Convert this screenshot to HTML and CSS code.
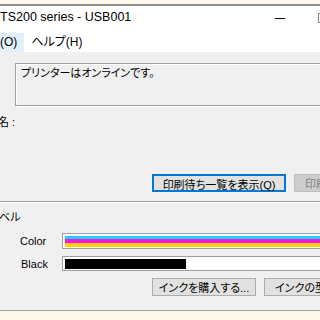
FILE: index.html
```html
<!DOCTYPE html>
<html lang="ja">
<head>
    <meta charset="UTF-8">
    <title>TS200 series - USB001</title>
    <link rel="stylesheet" href="styles.css">
</head>
<body>
    <div class="desk top"></div>
    <div class="window">
        <div class="titlebar">
            <span class="title">TS200 series - USB001</span>
            <div class="controls">
                <span class="min"></span>
                <span class="max"></span>
            </div>
        </div>
        <div class="menubar">
            <span class="menu active">(O)</span>
            <span class="menu">ヘルプ(H)</span>
        </div>
        <div class="client">
            <div class="status">プリンターはオンラインです。</div>
            <div class="label name">名 :</div>
            <div class="label colon">：</div>
            <div class="btnrow queue">
                <button class="btn default">印刷待ち一覧を表示(Q)</button>
                <button class="btn" disabled>印刷設定(S)...</button>
            </div>
            <div class="sep"></div>
            <div class="label level">ベル</div>
            <div class="inkrow color">
                <span class="inklabel">Color</span>
                <div class="gauge">
                    <div class="stripe cyan"></div>
                    <div class="stripe magenta"></div>
                    <div class="stripe yellow"></div>
                </div>
            </div>
            <div class="inkrow black">
                <span class="inklabel">Black</span>
                <div class="gauge">
                    <div class="fill" style="width: 121px"></div>
                </div>
            </div>
            <div class="btnrow ink">
                <button class="btn buy">インクを購入する...</button>
                <button class="btn">インクの型番(M)...</button>
            </div>
        </div>
        <div class="desk bottom"></div>
    </div>
</body>
</html>
```

FILE: styles.css
```css
body {
    margin: 0;
    width: 320px;
    height: 320px;
    overflow: hidden;
    background: #fdf8ec;
    font-family: "Liberation Sans", "Noto Sans CJK JP", sans-serif;
    font-feature-settings: "palt";
}
.desk {
    background: #fdf8ec;
}
.desk.top {
    height: 4px;
    border-bottom: 2px solid #8e8e8e;
}
.window {
    width: 320px;
    overflow: hidden;
}
.titlebar {
    height: 22px;
    background: #fff;
    display: flex;
    align-items: center;
    font-size: 12.5px;
    color: #000;
}
.title {
    flex: 1;
    white-space: nowrap;
}
.controls {
    display: flex;
    flex-shrink: 0;
    align-items: center;
    gap: 33px;
    margin-right: -8px;
}
.min {
    flex-shrink: 0;
    width: 10px;
    height: 1px;
    background: #000;
    margin-top: 3px;
}
.max {
    flex-shrink: 0;
    width: 8px;
    height: 8px;
    border: 1px solid #8a8a8a;
    margin-top: 2px;
}
.menubar {
    height: 24px;
    background: #fff;
    display: flex;
    align-items: flex-end;
    font-size: 12px;
}
.menu {
    height: 19px;
    line-height: 19px;
    padding: 0 7px;
}
.menu.active {
    background: #e3f0fb;
    padding: 0 7px 0 0;
}
.client {
    background: #f0f0f0;
    height: 258px;
    border-bottom: 1px solid #9e9e9e;
    font-size: 11px;
    color: #000;
    display: flex;
    flex-direction: column;
    width: 420px;
}
.status {
    margin: 11px 0 0 15px;
    border: 1px solid #a0a0a0;
    box-shadow: inset 1px 1px #fff, 1px 1px #fff;
    padding: 3px 5px;
    line-height: 13px;
    box-sizing: border-box;
    height: 43px;
}
.label {
    height: 13px;
    line-height: 13px;
}
.label.name {
    margin-top: 10px;
    margin-left: -2px;
}
.label.colon {
    margin-top: 27px;
    margin-left: -9px;
}
.btnrow {
    display: flex;
    gap: 8px;
    padding-left: 152px;
}
.btnrow.queue {
    margin-top: 5px;
}
.btn {
    height: 18px;
    padding: 0 10px;
    font: inherit;
    font-feature-settings: "palt";
    background: #e1e1e1;
    border: 1px solid #adadad;
    color: #000;
    white-space: nowrap;
}
.btn.default {
    border: 2px solid #0078d7;
    width: 134px;
    padding: 0;
}
.btn:disabled {
    background: #cccccc;
    border-color: #bfbfbf;
    color: #838383;
}
.sep {
    margin-top: 9px;
    height: 1px;
    background: #a0a0a0;
    border-bottom: 1px solid #fff;
}
.label.level {
    margin-top: 8px;
    margin-left: -1px;
}
.inkrow {
    display: flex;
    align-items: center;
}
.inkrow.color {
    margin-top: 9px;
}
.inkrow.black {
    margin-top: 7px;
}
.inklabel {
    width: 42px;
    padding-left: 20px;
}
.inkrow.black .inklabel {
    padding-left: 21px;
    width: 41px;
}
.gauge {
    flex: 1;
    background: #fff;
    border: 1px solid #a0a0a0;
    padding: 2px 2px 1px;
}
.stripe {
    height: 4px;
}
.stripe.cyan {
    height: 3px;
    background: #1ed2f4;
}
.stripe.magenta {
    background: #f914e4;
}
.stripe.yellow {
    background: #fcd400;
}
.fill {
    height: 10px;
    background: #000;
}
.btnrow.ink {
    margin-top: 7px;
}
.btn.buy {
    width: 104px;
    padding: 0;
}
.desk.bottom {
    height: 10px;
}
```
